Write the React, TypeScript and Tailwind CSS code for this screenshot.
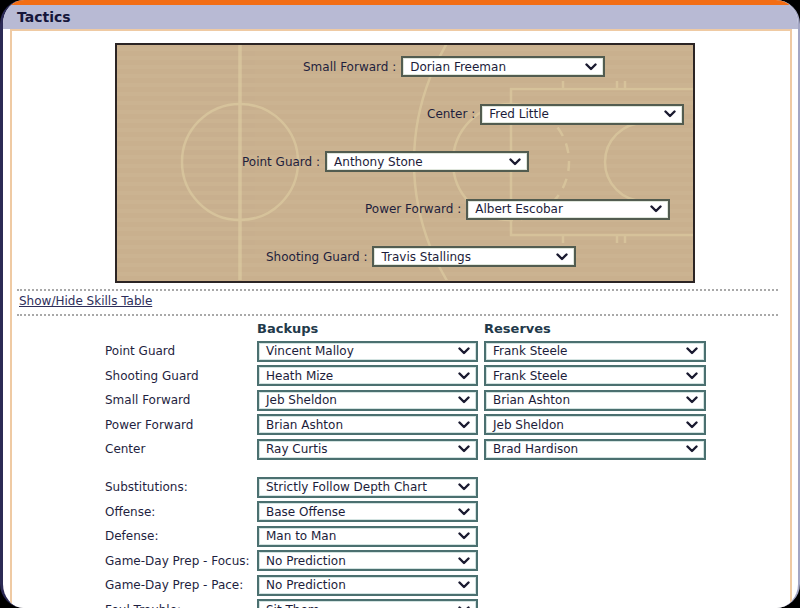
import React from "react";

function Chevron() {
  return (
    <svg width="12" height="8" viewBox="0 0 12 8" className="shrink-0">
      <path d="M1.5 1.5 L6 6 L10.5 1.5" fill="none" stroke="#1a1a30" strokeWidth="2.4" strokeLinecap="round" strokeLinejoin="round" />
    </svg>
  );
}

function Select({ value, court }: { value: string; court?: boolean }) {
  return (
    <div
      className={
        "flex h-[21px] items-center justify-between bg-white pl-[7px] pr-[6px] text-[12px] leading-none text-[#1c1c3a] border-2 " +
        (court
          ? "w-[204px] border-[#525c50] shadow-[inset_0_0_0_1px_#dfe6dc]"
          : "w-full border-[#4b7070] shadow-[inset_0_0_0_1px_#d3e3e1]")
      }
    >
      <span className="whitespace-nowrap">{value}</span>
      <Chevron />
    </div>
  );
}

function CourtLines() {
  const line = "#dfcfa3";
  return (
    <svg className="absolute inset-0" width="576" height="235" viewBox="0 0 576 235">
      <g fill="none" stroke={line} strokeWidth="2.5" opacity="0.6">
        <line x1="123" y1="0" x2="123" y2="235" strokeWidth="3.5" />
        <circle cx="123" cy="117" r="58" />
        <path d="M576 44 H394 V190 H576" />
        <path d="M394 59 A58 58 0 0 0 394 175" />
        <path d="M394 59 A58 58 0 0 1 394 175" strokeDasharray="10 8" />
        <path d="M527 78 A39 39 0 0 0 527 156" />
        <path d="M527 -113 A230 230 0 0 0 527 347" />
        <line x1="446" y1="36" x2="446" y2="44" />
        <line x1="500" y1="36" x2="500" y2="44" />
        <line x1="508" y1="36" x2="508" y2="44" />
        <line x1="446" y1="190" x2="446" y2="198" />
        <line x1="500" y1="190" x2="500" y2="198" />
        <line x1="508" y1="190" x2="508" y2="198" />
      </g>
    </svg>
  );
}

const courtRows = [
  { label: "Small Forward :", value: "Dorian Freeman", pl: "pl-[186px]" },
  { label: "Center :", value: "Fred Little", pl: "pl-[310px]" },
  { label: "Point Guard :", value: "Anthony Stone", pl: "pl-[125px]" },
  { label: "Power Forward :", value: "Albert Escobar", pl: "pl-[248px]" },
  { label: "Shooting Guard :", value: "Travis Stallings", pl: "pl-[149px]" },
];

const depth = [
  ["Point Guard", "Vincent Malloy", "Frank Steele"],
  ["Shooting Guard", "Heath Mize", "Frank Steele"],
  ["Small Forward", "Jeb Sheldon", "Brian Ashton"],
  ["Power Forward", "Brian Ashton", "Jeb Sheldon"],
  ["Center", "Ray Curtis", "Brad Hardison"],
];

const settings = [
  ["Substitutions:", "Strictly Follow Depth Chart"],
  ["Offense:", "Base Offense"],
  ["Defense:", "Man to Man"],
  ["Game-Day Prep - Focus:", "No Prediction"],
  ["Game-Day Prep - Pace:", "No Prediction"],
  ["Foul Trouble:", "Sit Them"],
];

export default function App() {
  return (
    <div className="h-[608px] w-[800px] overflow-hidden bg-black font-['DejaVu_Sans',sans-serif]">
      <div className="flex h-full flex-col overflow-hidden rounded-[24px] border-l-[3px] border-r-2 border-l-[#2b2a55] border-r-[#a3a6c4] bg-white">
        <div className="h-[5px] shrink-0 bg-[#f36d14]" />
        <div className="flex h-[24px] shrink-0 items-center bg-[#b8bad4] pl-[14px] text-[14px] font-bold text-[#15153a]">
          Tactics
        </div>
        <div className="ml-[7px] mr-[6px] flex-1 border-x-2 border-t-2 border-[#efcaa3] bg-white">
          {/* court */}
          <div className="ml-[103px] mt-[12px] h-[240px] w-[580px] border-2 border-[#2b2424] bg-[repeating-linear-gradient(0deg,#c9b08e_0px,#c9b08e_5px,#cbb391_5px,#cbb391_9px)]">
            <div className="relative h-full w-full">
              <CourtLines />
              <div className="relative flex flex-col gap-[26.5px] pt-[11px]">
                {courtRows.map((r) => (
                  <div key={r.label} className={"flex items-center " + r.pl}>
                    <span className="mr-[5px] whitespace-nowrap text-[12px] text-[#1f1f3d]">{r.label}</span>
                    <Select value={r.value} court />
                  </div>
                ))}
              </div>
            </div>
          </div>

          <div className="ml-[5px] mr-[12px] mt-[6px] border-t-2 border-dotted border-[#a9a9a9]" />
          <div className="h-[23px] pl-[7px] pt-[2px] text-[12px] leading-[16px]">
            <span className="text-[#2e2e5a] underline">Show/Hide Skills Table</span>
          </div>
          <div className="ml-[5px] mr-[12px] border-t-2 border-dotted border-[#a9a9a9]" />

          {/* depth chart */}
          <div className="ml-[93px] mt-[5px] grid w-[601px] grid-cols-[152px_227px_222px] gap-y-[3.5px] text-[12px] text-[#1f1f3f]">
            <div className="h-[16px]" />
            <div className="text-[13px] font-bold leading-[15px] text-[#22394a]">Backups</div>
            <div className="text-[13px] font-bold leading-[15px] text-[#22394a]">Reserves</div>
            {depth.map(([pos, b, r]) => (
              <React.Fragment key={pos}>
                <div className="flex h-[21px] items-center whitespace-nowrap">{pos}</div>
                <div className="pr-[6px]">
                  <Select value={b} />
                </div>
                <Select value={r} />
              </React.Fragment>
            ))}
          </div>

          <div className="ml-[93px] mt-[17px] grid w-[373px] grid-cols-[152px_221px] gap-y-[3.5px] text-[12px] text-[#1f1f3f]">
            {settings.map(([label, v]) => (
              <React.Fragment key={label}>
                <div className="flex h-[21px] items-center whitespace-nowrap">{label}</div>
                <Select value={v} />
              </React.Fragment>
            ))}
          </div>
        </div>
      </div>
    </div>
  );
}
